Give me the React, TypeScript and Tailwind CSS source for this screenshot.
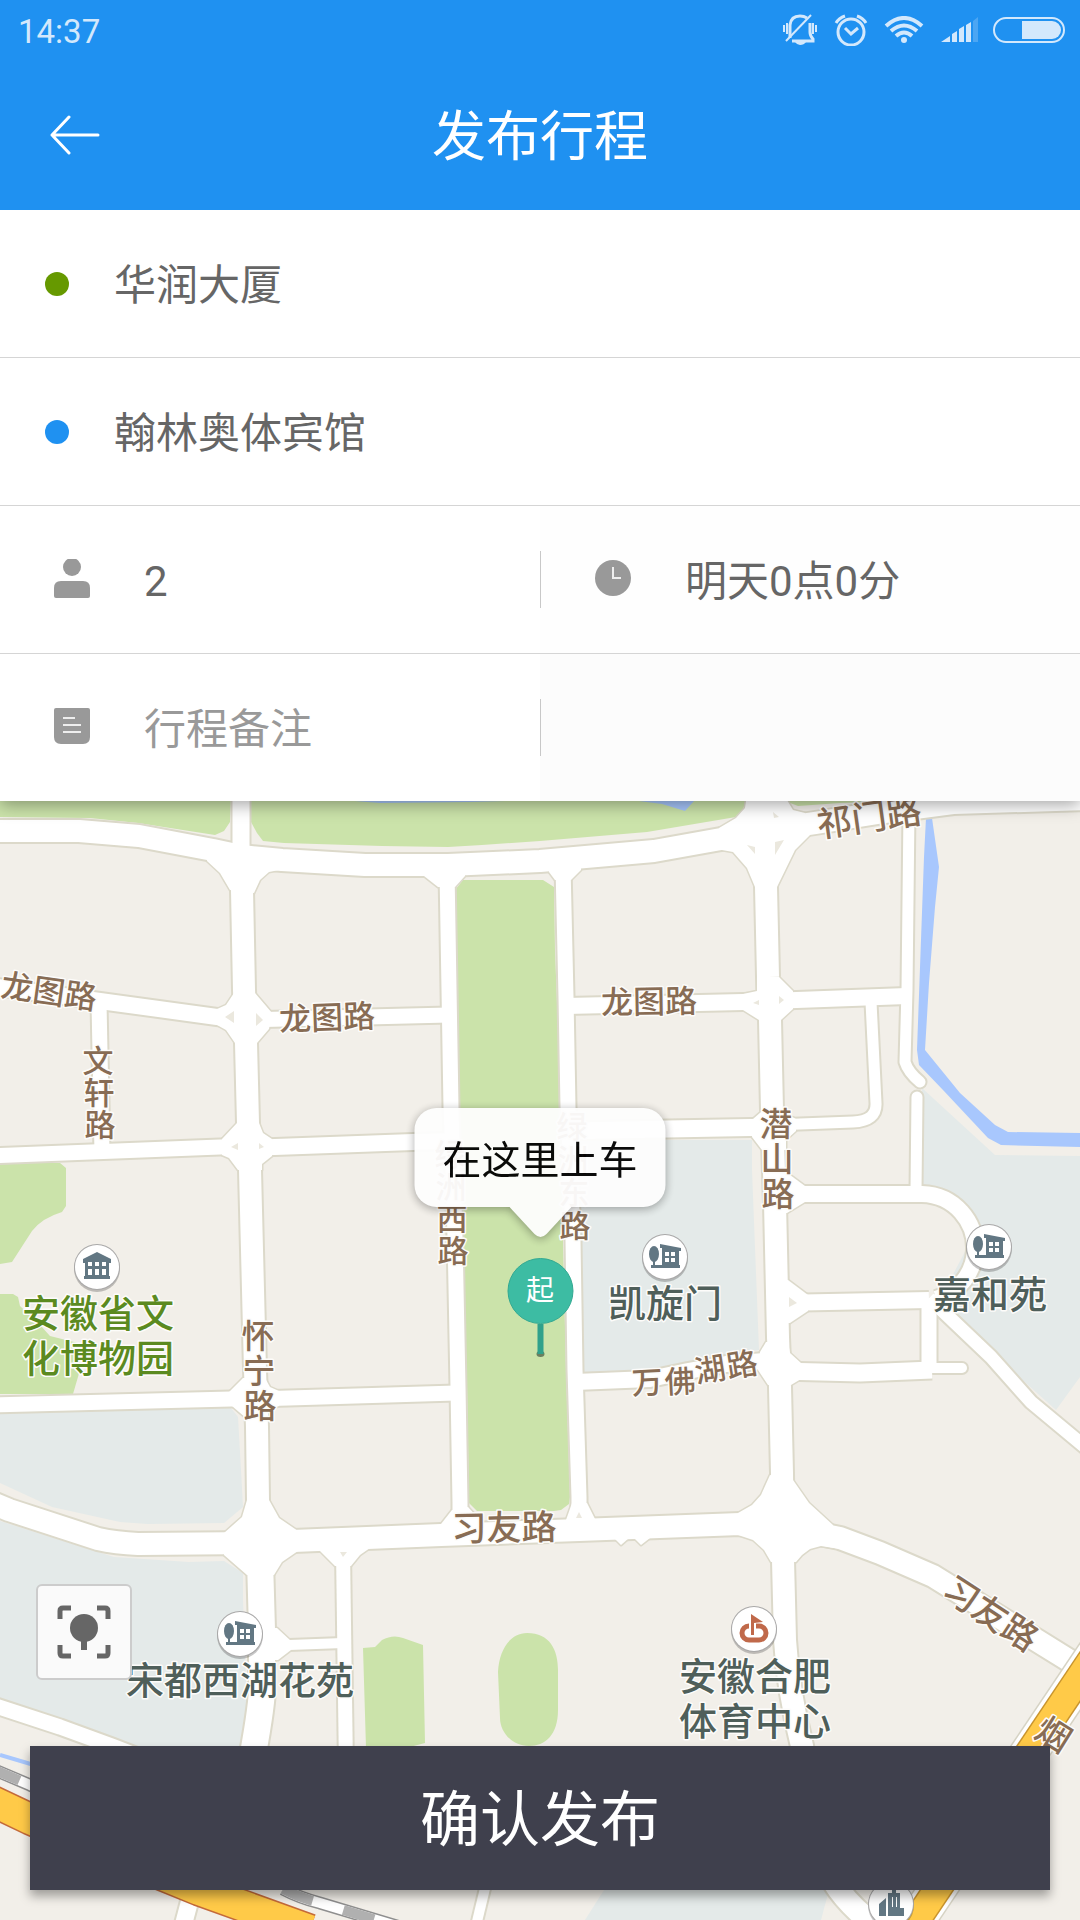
import React from 'react'

type Road = { d: string; w: number; round?: boolean }

const roads: Road[] = [
  { d: 'M-10 831 L79 831 L139 836 L213 850 L241 856 L282 860 L365 865 L448 865 L540 861 L654 851 L721 839 L781 828 L815 823 L884 812 L953 803 L1090 799', w: 22 },
  { d: 'M241 780 V856', w: 17 },
  { d: 'M242 856 L242 890 L244 990 L246 1043 L248 1123 L250 1170 L255 1370 L257 1427 L258 1500 L260 1573', w: 22 },
  { d: 'M260 1560 L262 1630 L262 1690 Q261 1712 250 1770', w: 26 },
  { d: 'M447 870 L451 1107 L455 1237 L458 1387 L460 1503 L460 1530', w: 15 },
  { d: 'M563 866 L566 997 L568 1107 L573 1240 L575 1370 L579 1497 L579 1526', w: 15 },
  { d: 'M765 780 L766 887 L768 977 L770 1020 L772 1110 L775 1203 L778 1337 L780 1387 L782 1473 L783 1560 L785 1640 Q788 1690 802 1746 L820 1850 Q830 1892 876 1926', w: 22 },
  { d: 'M-10 986 L100 1001 L217 1017 L246 1020', w: 16 },
  { d: 'M99 1002 L102 1153', w: 15 },
  { d: 'M246 1020 L449 1015', w: 15 },
  { d: 'M566 1006 L743 1002 L769 1001', w: 16 },
  { d: 'M769 1001 L907 996', w: 16 },
  { d: 'M-10 1156 L220 1147 L250 1146', w: 15 },
  { d: 'M250 1148 L413 1142 L452 1141', w: 16 },
  { d: 'M568 1131 L667 1129 L773 1127', w: 17 },
  { d: 'M773 1125 L853 1122 Q877 1121 876 1103 L871 1002', w: 11 },
  { d: 'M909 810 L907 990 L905 1062 Q908 1072 920 1082', w: 11, round: true },
  { d: 'M917 1097 L916 1190', w: 11, round: true },
  { d: 'M776 1194 H922 C955 1195 976 1222 975 1250 C974 1272 960 1292 936 1299', w: 16 },
  { d: 'M778 1303 L929 1300', w: 16 },
  { d: 'M929 1298 L991 1357 L1031 1402 L1090 1451', w: 13 },
  { d: 'M929 1300 V1370', w: 15 },
  { d: 'M780 1371 L860 1373 L932 1370', w: 17 },
  { d: 'M928 1368 H962', w: 10, round: true },
  { d: 'M-10 1405 L231 1399 L255 1398', w: 15 },
  { d: 'M255 1399 L456 1393', w: 15 },
  { d: 'M575 1382 L650 1379 L688 1371 L726 1364 L778 1360', w: 16 },
  { d: 'M-10 1502 L9 1510 L98 1539 Q116 1543 138 1544 L260 1543 L293 1541 L441 1535 L579 1530 L740 1524 L783 1525 L800 1530 L840 1538 L880 1553 L933 1576 L1070 1661 L1090 1673', w: 22 },
  { d: 'M343 1550 L346 1770', w: 14 },
  { d: 'M262 1646 L343 1643', w: 10 },
  { d: 'M-10 1704 L60 1727 L112 1746 L200 1780', w: 15 },
  { d: 'M192 1892 L182 1930', w: 17 },
  { d: 'M487 1880 L475 1930', w: 10 },
]

const junctions: string[] = [
  'M207 861 L220 873 L230 890 L254 893 L260 880 L269 872 L279 870 L279 855 L207 847Z',
  'M424 876 L438 887 H455 L465 876 V865 H424Z',
  'M549 872 L555 880 H571 L581 870 V860 H549Z',
  'M719 828 L736 818 L745 808 L747 795 H784 L793 810 L805 813 L810 835 L795 850 L777 887 H755 L747 868 L733 852 L722 850Z',
  'M217 1009 L226 1005 L234 993 H255 L272 1013 L269 1029 L257 1043 H235 L226 1030 L217 1025Z',
  'M743 994 L757 991 V977 H779 L793 991 V1009 L781 1020 H759 L743 1010Z',
  'M222 1139 L237 1123 H259 L263 1133 L272 1139 V1156 L262 1164 V1170 H238 L229 1158 L222 1155Z',
  'M753 1119 L761 1112 H783 L796 1119 L796 1131 L786 1140 V1150 H762 L752 1137Z',
  'M786 1172 L805 1186 V1202 L787 1213 L774 1213 V1172Z',
  'M788 1280 L808 1295 V1311 L790 1323 H778 V1280Z',
  'M790 1353 L801 1363 V1379 L791 1385 H768 L758 1370 L760 1352 L766 1342 L788 1342Z',
  'M229 1392 L243 1378 H265 L270 1387 L279 1391 V1406 L268 1410 V1418 H246 L232 1406Z',
  'M247 1500 L242 1517 L224 1533 V1555 L247 1575 H274 L282 1562 L298 1551 V1531 L279 1518 L269 1500Z',
  'M320 1551 L335 1566 H351 L360 1555 L370 1548 V1540 H320Z',
  'M277 1628 L291 1641 V1650 L278 1660 H262 V1628Z',
  'M452 1510 L441 1524 V1535 H479 V1519 L468 1507Z',
  'M572 1503 L566 1520 V1530 H595 V1519 L587 1503Z',
  'M770 1475 L761 1495 L752 1505 L738 1513 V1535 L753 1540 L764 1550 L771 1562 H796 L802 1555 L810 1549 L821 1546 L840 1549 L833 1525 L809 1503 L793 1480Z',
  'M614 1538 L621 1545 L629 1538Z',
  'M634 1538 L641 1545 L650 1538Z',
]

const islands: string[] = [
  'M225 1017 L234 1011 V1023Z',
  'M256 1013 L263 1020 L256 1026Z',
  'M747 845 L755 847 V854Z',
  'M775 842 L784 840 L775 855Z',
  'M773 812 L779 817 L774 818Z',
  'M753 1003 L759 1000 V1005Z',
  'M779 996 L784 1000 L779 1004Z',
  'M231 1147 L238 1143 V1150Z',
  'M259 1143 L264 1147 L259 1149Z',
  'M789 1297 L797 1303 L789 1307Z',
  'M340 1552 H347 L343 1557Z',
  'M576 1518 L579 1512 L582 1518Z',
]

const RAIL_WEST = 'M-10 1768 L30 1785 L60 1799'
const RAIL_SOUTH = 'M283 1889 Q300 1898 320 1903 L400 1927'

const BROWN = '#886c54'
const SLATE = '#4f5f5a'
const OLIVE = '#5b8a20'

function Label({ x, y, size, rotate = 0, color = BROWN, children }: { x: number; y: number; size: number; rotate?: number; color?: string; children: string }) {
  return (
    <text x={x} y={y} dy="0.38em" fontSize={size} fontWeight={500} textAnchor="middle" fill={color} stroke="#fdfcfa" strokeWidth={3} strokeLinejoin="round" paintOrder="stroke" transform={`rotate(${rotate} ${x} ${y})`}>
      {children}
    </text>
  )
}

function VerticalLabel({ x, y, size, step, text, drift = 1 }: { x: number; y: number; size: number; step: number; text: string; drift?: number }) {
  return (
    <>
      {text.split('').map((c, i) => (
        <Label key={i} x={x + i * drift} y={y + i * step} size={size}>{c}</Label>
      ))}
    </>
  )
}

function Poi({ x, y, children }: { x: number; y: number; children: React.ReactNode }) {
  return (
    <g transform={`translate(${x} ${y})`}>
      <circle cy={2} r={23} fill="#000" opacity={0.22} />
      <circle r={23} fill="#a9a8a8" />
      <circle r={22} fill="#fff" />
      {children}
    </g>
  )
}

function HouseGlyph() {
  return (
    <g fill="#627783">
      <ellipse cx={-11} cy={-3} rx={5} ry={8} />
      <path d="M-12 3 H-10 V8 H-3 V-9 H-5 V-13 L16 -9 V-6 H14 V8 H15 V11 H-14 V8 H-12Z" />
      <path d="M0 -5 H4 V-1 H0Z M6 -5 H10 V-1 H6Z M0 1 H4 V5 H0Z M6 1 H10 V5 H6Z" fill="#fff" />
    </g>
  )
}

function CityMap() {
  return (
    <svg className="absolute inset-0 h-full w-full" viewBox="0 801 1080 1119" preserveAspectRatio="xMidYMid slice" fontFamily="'Noto Sans CJK SC', sans-serif" aria-label="地图">
      <rect x={-1000} y={0} width={3000} height={3000} fill="#f2efe9" />

      <g fill="#e4eae9">
        <path d="M922 1088 L995 1155 L1080 1156 V1377 L1056 1410 L998 1358 L938 1303 L979 1225 L922 1187Z" />
        <path d="M577 1140 H752 V1170 L759 1350 L688 1362 L660 1370 L583 1373Z" />
        <path d="M0 1413 L231 1408 L238 1417 L241 1470 L243 1507 L224 1523 L148 1524 L120 1522 L52 1507 L0 1483Z" />
        <path d="M0 1521 L114 1557 L189 1562 L224 1561 L243 1573 V1600 L247 1707 L240 1760 H150 L0 1700Z" />
        <path d="M604 1890 H829 L821 1920 H585Z" />
      </g>
      <g fill="#cbe3aa">
        <path d="M0 795 H231 L230 822 L224 831 L215 835 L138 823 L90 818 L0 817Z" />
        <path d="M251 795 V822 L257 833 L263 841 L284 843 L382 846 L448 847 L482 845 L540 841 L647 832 L736 817 L743 810 L747 795Z" />
        <path d="M785 801 L798 806 L840 803 L905 801Z" />
        <path d="M463 880 L455 890 L459 1107 L463 1237 L467 1387 L469 1503 L477 1511 H554 L561 1510 L569 1504 L570 1497 L566 1370 L563 1240 L561 1107 L555 950 L554 887 L543 880Z" />
        <path d="M0 1163 H60 L66 1168 V1206 L62 1212 Q42 1218 32 1231 L12 1262 L0 1264Z" />
        <path d="M0 1294 H13 L18 1297 L20 1306 L40 1325 L50 1336 L78 1343 L80 1370 L73 1394 H0Z" />
        <path d="M363 1648 L375 1647 L382 1640 Q393 1634 403 1638 L423 1645 L425 1743 L406 1748 H366Z" />
        <path d="M527 1633 C550 1633 558 1650 558 1670 V1710 C558 1735 545 1746 529 1746 C512 1746 500 1732 500 1718 L498 1672 C499 1650 510 1633 527 1633Z" />
      </g>
      <g fill="#a8c7fd">
        <path d="M355 795 H505 V801 L470 802 L380 803 L355 801Z" />
        <path d="M639 801 H694 L685 811 L662 804Z" />
        <path d="M926 818 H932 L939 867 L935 907 L929 983 L925 1050 L960 1093 L995 1125 L1008 1132 L1080 1133 V1147 L1001 1145 L988 1138 L943 1090 L919 1065 L917 1050 L924 857Z" />
      </g>
      <path d="M0 1755 L34 1765" stroke="#a8c7fd" strokeWidth={4} />

      <g fill="none" stroke="#dcd9ca" strokeLinejoin="round">
        {roads.map((r, i) => (
          <path key={i} d={r.d} strokeWidth={r.w + 4} strokeLinecap={r.round ? 'round' : 'butt'} />
        ))}
        {junctions.map((d, i) => (
          <path key={i} d={d} fill="#dcd9ca" strokeWidth={3} />
        ))}
      </g>
      <g fill="none" stroke="#fff" strokeLinejoin="round">
        {roads.map((r, i) => (
          <path key={i} d={r.d} strokeWidth={r.w} strokeLinecap={r.round ? 'round' : 'butt'} />
        ))}
      </g>
      <g fill="#fff">
        {junctions.map((d, i) => <path key={i} d={d} />)}
      </g>
      <g fill="#ebe8de">
        {islands.map((d, i) => <path key={i} d={d} />)}
      </g>

      <g fill="none">
        {[RAIL_WEST, RAIL_SOUTH].map((d) => (
          <g key={d}>
            <path d={d} stroke="#8f8f8f" strokeWidth={13} />
            <path d={d} stroke="#fff" strokeWidth={10} />
            <path d={d} stroke="#b0b0b0" strokeWidth={10} strokeDasharray="32 32" />
          </g>
        ))}
        <path d="M-10 1800 L30 1819 Q120 1858 199 1890 L310 1930" stroke="#c46a3a" strokeWidth={33} />
        <path d="M-10 1800 L30 1819 Q120 1858 199 1890 L310 1930" stroke="#ffca48" strokeWidth={30} />
        <path d="M1110 1632 L910 1930" stroke="#d6d3c4" strokeWidth={39} />
        <path d="M1110 1632 L910 1930" stroke="#fff" strokeWidth={36} />
        <path d="M1110 1632 L910 1930" stroke="#c9952f" strokeWidth={29} />
        <path d="M1110 1632 L910 1930" stroke="#ffca48" strokeWidth={26} />
      </g>

      <Label x={869} y={817} size={35} rotate={-8}>祁门路</Label>
      <Label x={49} y={991} size={32} rotate={8}>龙图路</Label>
      <Label x={327} y={1017} size={32} rotate={-2}>龙图路</Label>
      <Label x={649} y={1001} size={32} rotate={-1}>龙图路</Label>
      <VerticalLabel x={98} y={1060} size={31} step={32} text="文轩路" />
      <VerticalLabel x={258} y={1335} size={33} step={35} text="怀宁路" />
      <VerticalLabel x={776} y={1123} size={33} step={35} text="潜山路" />
      <VerticalLabel x={450} y={1154} size={31} step={32} text="绿洲西路" />
      <VerticalLabel x={572} y={1126} size={31} step={33} text="绿洲东路" />
      <Label x={647} y={1382} size={31} rotate={-3}>万</Label>
      <Label x={680} y={1381} size={31} rotate={-3}>佛</Label>
      <Label x={710} y={1369} size={31} rotate={-9}>湖</Label>
      <Label x={742} y={1364} size={31} rotate={-9}>路</Label>
      <Label x={504} y={1527} size={35} rotate={-1}>习友路</Label>
      <Label x={991} y={1613} size={35} rotate={33}>习友路</Label>
      <Label x={1054} y={1734} size={34} rotate={32}>烟</Label>

      <Poi x={97} y={1267}>
        <path d="M-14 -8 L0 -15 L14 -8 V-4 H12 V9 H13 V12 H-13 V9 H-12 V-4 H-14Z" fill="#627783" />
        <path d="M-9 -5 H-5 V-1 H-9Z M-2 -5 H2 V-1 H-2Z M5 -5 H9 V-1 H5Z M-9 2 H-5 V8 H-9Z M-2 2 H2 V8 H-2Z M5 2 H9 V8 H5Z" fill="#fff" />
      </Poi>
      <Label x={98} y={1313} size={38} color={OLIVE}>安徽省文</Label>
      <Label x={98} y={1358} size={38} color={OLIVE}>化博物园</Label>

      <Poi x={665} y={1257}><HouseGlyph /></Poi>
      <Label x={665} y={1303} size={38} color={SLATE}>凯旋门</Label>
      <Poi x={989} y={1247}><HouseGlyph /></Poi>
      <Label x={990} y={1294} size={38} color={SLATE}>嘉和苑</Label>
      <Poi x={240} y={1634}><HouseGlyph /></Poi>
      <Label x={240} y={1680} size={38} color={SLATE}>宋都西湖花苑</Label>

      <Poi x={754} y={1629}>
        <rect x={-12} y={-3} width={24} height={14} rx={7} fill="none" stroke="#c0694a" strokeWidth={5} />
        <path d="M-5 -8 H2 V6 H-5Z" fill="#fff" />
        <path d="M-3 -15 L9 -7 L0 -6 V6 H-3Z" fill="#c0694a" />
      </Poi>
      <Label x={755} y={1676} size={38} color={SLATE}>安徽合肥</Label>
      <Label x={755} y={1721} size={38} color={SLATE}>体育中心</Label>

      <Poi x={891} y={1904}>
        <path d="M-12 12 V0 L-5 -6 V12Z M-3 12 V-11 H1 V-14 H5 V-11 H9 V4 H13 V12Z" fill="#627783" />
        <path d="M1 -7 H2 V3 H1Z M5 -7 H6 V3 H5Z" fill="#fff" />
      </Poi>
    </svg>
  )
}

function StatusBar() {
  return (
    <div className="flex h-[60px] items-center justify-between pr-[15px] pl-[18px] text-[#d3e8fc]">
      <span className="pt-0.5 text-[33px] leading-none">14:37</span>
      <div className="flex items-center">
        <svg className="mr-4" width="36" height="32" viewBox="0 0 36 32" fill="none" stroke="currentColor">
          <path d="M8 24 L8 11 Q9 2 18 2 Q22 2 25 4 M28 9 V18 Q28 22 31 25 V27 H10" strokeWidth={3} />
          <path d="M4 27 L29 1" strokeWidth={2} />
          <path d="M2 11 V18 M5 9 V20 M31 9 V20 M34 11 V18" strokeWidth={2} />
          <path d="M13 28 H24 Q22 31 18 31 Q15 31 13 28Z" fill="currentColor" stroke="none" />
        </svg>
        <svg className="mr-4" width="34" height="32" viewBox="0 0 34 32" fill="none" stroke="currentColor" strokeWidth={3}>
          <circle cx={17} cy={18} r={13} />
          <path d="M11 14 L17 20 L24 14" />
          <path d="M2 9 Q5 4 11 2 M32 9 Q29 4 23 2" />
        </svg>
        <svg className="mr-[17px]" width="40" height="28" viewBox="0 0 40 28" fill="none" stroke="currentColor" strokeWidth={4}>
          <path d="M2 10 Q20 -6 38 10" />
          <path d="M7 15 Q20 4 33 15" />
          <path d="M12 20 Q20 13 28 20" />
          <circle cx={20} cy={24} r={3} fill="currentColor" stroke="none" />
        </svg>
        <svg className="mr-[14px]" width="38" height="26" viewBox="0 0 38 26" fill="currentColor">
          <path d="M0 25 L9 19 V25Z M11 25 V17 L16 14 V25Z M18 25 V12 L23 9 V25Z M25 25 V8 L30 5 V25Z" />
          <path d="M32 25 V4 L37 0 V25Z" opacity={0.25} />
        </svg>
        <svg width="72" height="26" viewBox="0 0 72 26">
          <rect x={1} y={1} width={70} height={24} rx={12} fill="none" stroke="currentColor" strokeWidth={2} />
          <path d="M29 4 H59 A9 9 0 0 1 59 22 H29Z" fill="currentColor" />
        </svg>
      </div>
    </div>
  )
}

export default function App() {
  return (
    <div className="flex min-h-screen flex-col overflow-hidden bg-white font-[Roboto,'Noto_Sans_CJK_SC',sans-serif] text-[#666]">
      <header className="relative z-20 bg-[#1f91f1] text-white">
        <StatusBar />
        <div className="grid h-[150px] grid-cols-[150px_1fr_150px] items-center">
          <button type="button" aria-label="返回" className="flex h-full items-center pl-[50px]">
            <svg width="50" height="40" viewBox="0 0 50 40" fill="none" stroke="currentColor" strokeWidth={3} strokeLinecap="round" strokeLinejoin="round">
              <path d="M48 20 H2 M19 2 L2 20 L19 38" />
            </svg>
          </button>
          <h1 className="pt-1.5 text-center text-[54px] leading-none">发布行程</h1>
        </div>
      </header>

      <form className="relative z-10 bg-white text-[42px] leading-[60px] shadow-[0_4px_16px_rgba(0,0,0,0.35)]">
        <button type="button" className="flex h-[148px] w-full items-center border-b border-[#d5d5d5] pl-[45px] text-left">
          <span className="mr-[45px] size-6 rounded-full bg-[#669900]" />
          <span className="pt-1">华润大厦</span>
        </button>
        <button type="button" className="flex h-[148px] w-full items-center border-b border-[#d5d5d5] pl-[45px] text-left">
          <span className="mr-[45px] size-6 rounded-full bg-[#1f91f1]" />
          <span className="pt-1">翰林奥体宾馆</span>
        </button>
        <div className="grid h-[148px] grid-cols-2 border-b border-[#d5d5d5]">
          <button type="button" className="flex items-center pl-[54px] text-left">
            <svg className="mr-[54px]" width="36" height="42" viewBox="0 0 36 42" fill="#999">
              <circle cx={18} cy={8} r={9} />
              <path d="M0 29 Q0 22 7 22 H29 Q36 22 36 29 V37 Q36 39 34 39 H2 Q0 39 0 37Z" />
            </svg>
            <span className="pt-1">2</span>
          </button>
          <button type="button" className="flex items-center bg-[#fefefe] text-left">
            <span className="mr-[54px] h-[57px] w-px bg-[#c8c8c8]" />
            <svg className="mr-[54px]" width="36" height="40" viewBox="0 0 36 40" fill="none">
              <circle cx={18} cy={18} r={18} fill="#999" />
              <path d="M18 7 V18 H26" stroke="#eee" strokeWidth={2} />
            </svg>
            <span className="pt-1">明天0点0分</span>
          </button>
        </div>
        <div className="grid h-[147px] grid-cols-2">
          <label className="flex items-center pl-[54px]">
            <svg className="mr-[54px] shrink-0" width="36" height="40" viewBox="0 0 36 40" fill="none">
              <path d="M0 2 Q0 0 2 0 H34 Q36 0 36 2 V29 Q36 36 29 36 H7 Q0 36 0 29Z" fill="#999" />
              <path d="M9 10 H21 M9 17 H27 M9 24 H27" stroke="#eee" strokeWidth={2} />
            </svg>
            <input type="text" aria-label="行程备注" placeholder="行程备注" className="h-[68px] w-full min-w-0 bg-transparent pt-1 outline-none placeholder:text-[#999]" />
          </label>
          <div className="flex items-center bg-[#fcfcfc]">
            <span className="h-[57px] w-px bg-[#c8c8c8]" />
          </div>
        </div>
      </form>

      <main className="relative min-h-[800px] flex-1 overflow-hidden">
        <CityMap />

        <div className="absolute top-1/2 left-1/2 flex -translate-x-1/2 -translate-y-full flex-col items-center pb-1">
          <div className="flex flex-col items-center opacity-95 drop-shadow-[0_2px_5px_rgba(0,0,0,0.35)]">
            <div className="rounded-[22px] bg-[#fefefe] px-7 pt-6 pb-4 text-[39px] leading-[59px] whitespace-nowrap text-black">在这里上车</div>
            <svg width="62" height="31" viewBox="0 0 62 31" fill="#fefefe">
              <path d="M0 0 H62 L37 27 Q31 33 25 27Z" />
            </svg>
          </div>
          <div className="mt-5 flex size-[66px] items-center justify-center rounded-full border border-[#33a992] bg-[#3dbca3] text-[28px] leading-none text-white">起</div>
          <svg width="10" height="33" viewBox="0 0 10 33">
            <ellipse cx={5} cy={30} rx={4} ry={3} fill="#6a7f5f" />
            <path d="M2 0 H8 V30 H2Z" fill="#30a18b" />
          </svg>
        </div>

        <div className="absolute inset-x-0 bottom-0 flex flex-col items-start px-[30px] pb-[30px]">
          <button type="button" aria-label="定位" className="mb-[66px] ml-[6px] flex size-24 items-center justify-center rounded-md border-2 border-[#ccc] bg-[#fafafa]">
            <svg width="54" height="54" viewBox="0 0 54 54" fill="none" stroke="#666" strokeWidth={5}>
              <path d="M3 14 V6 Q3 3 6 3 H14 M40 3 H48 Q51 3 51 6 V14 M51 40 V48 Q51 51 48 51 H40 M14 51 H6 Q3 51 3 48 V40" />
              <circle cx={27} cy={23} r={14} fill="#666" stroke="none" />
              <path d="M27 30 V45" strokeWidth={6} />
            </svg>
          </button>
          <button type="submit" className="h-[144px] w-full bg-[#3f404d] pt-1.5 text-[60px] leading-none text-white shadow-[0_6px_10px_rgba(0,0,0,0.35)]">确认发布</button>
        </div>
      </main>
    </div>
  )
}
